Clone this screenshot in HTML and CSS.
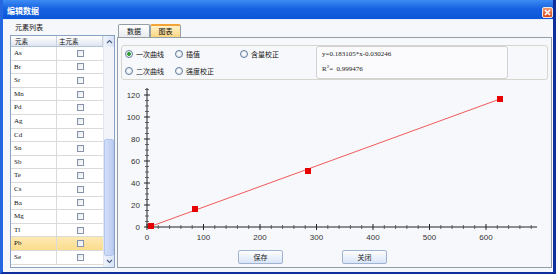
FILE: index.html
```html
<!DOCTYPE html>
<html lang="zh">
<head>
    <meta charset="UTF-8">
    <title>编辑数据</title>
    <link rel="stylesheet" href="styles.css">
</head>
<body>
    <div class="window">
        <div class="titlebar">
            <span class="title">编辑数据</span>
            <span class="close">
                <svg width="9" height="9" viewBox="0 0 9 9"><path d="M2 2L7 7M7 2L2 7" stroke="#fff" stroke-width="1.6"/></svg>
            </span>
        </div>
        <div class="client">
            <!-- 左侧 元素列表 -->
            <div class="left">
                <div class="label">元素列表</div>
                <div class="list">
                    <div class="grid">
                        <div class="head"><span class="hcell">元素</span><span class="hcell">主元素</span></div>
                        <div class="row"><span class="name">As</span><span class="check"><i></i></span></div>
                        <div class="row"><span class="name">Br</span><span class="check"><i></i></span></div>
                        <div class="row"><span class="name">Sr</span><span class="check"><i></i></span></div>
                        <div class="row"><span class="name">Mn</span><span class="check"><i></i></span></div>
                        <div class="row"><span class="name">Pd</span><span class="check"><i></i></span></div>
                        <div class="row"><span class="name">Ag</span><span class="check"><i></i></span></div>
                        <div class="row"><span class="name">Cd</span><span class="check"><i></i></span></div>
                        <div class="row"><span class="name">Sn</span><span class="check"><i></i></span></div>
                        <div class="row"><span class="name">Sb</span><span class="check"><i></i></span></div>
                        <div class="row"><span class="name">Te</span><span class="check"><i></i></span></div>
                        <div class="row"><span class="name">Cs</span><span class="check"><i></i></span></div>
                        <div class="row"><span class="name">Ba</span><span class="check"><i></i></span></div>
                        <div class="row"><span class="name">Mg</span><span class="check"><i></i></span></div>
                        <div class="row"><span class="name">Tl</span><span class="check"><i></i></span></div>
                        <div class="row sel"><span class="name">Pb</span><span class="check"><i></i></span></div>
                        <div class="row"><span class="name">Se</span><span class="check"><i></i></span></div>
                    </div>
                    <div class="scroll">
                        <div class="arrow">
                            <svg width="7" height="5" viewBox="0 0 7 5"><path d="M1 4L3.5 1.5L6 4" fill="none" stroke="#4d6185" stroke-width="1.2"/></svg>
                        </div>
                        <div class="track"><div class="thumb"></div></div>
                        <div class="arrow">
                            <svg width="7" height="5" viewBox="0 0 7 5"><path d="M1 1L3.5 3.5L6 1" fill="none" stroke="#4d6185" stroke-width="1.2"/></svg>
                        </div>
                    </div>
                </div>
            </div>

            <!-- 右侧 数据/图表 -->
            <div class="right">
                <div class="tabs">
                    <div class="tab">数据</div>
                    <div class="tab active">图表</div>
                </div>
                <div class="panel">
                    <div class="options">
                        <div class="radios">
                            <label class="radio on"><i></i>一次曲线</label>
                            <label class="radio"><i></i>插值</label>
                            <label class="radio"><i></i>含量校正</label>
                            <label class="radio"><i></i>二次曲线</label>
                            <label class="radio"><i></i>强度校正</label>
                        </div>
                        <div class="equation">
                            <div>y=0.183105*x-0.030246</div>
                            <div>R<sup>2</sup>=&nbsp; 0.999476</div>
                        </div>
                    </div>

                    <svg class="chart" width="427" height="163" viewBox="0 0 427 163">
                        <!-- axes -->
                        <path d="M26 5V144H416" fill="none" stroke="#222" stroke-width="1"/>
                        <!-- y ticks -->
                        <path d="M23 144h6M23 122h6M23 100h6M23 78h6M23 56h6M23 34h6M23 12h6" stroke="#222" stroke-width="1"/>
                        <path d="M24 138.5h4M24 133h4M24 127.5h4M24 116.5h4M24 111h4M24 105.5h4M24 94.5h4M24 89h4M24 83.5h4M24 72.5h4M24 67h4M24 61.5h4M24 50.5h4M24 45h4M24 39.5h4M24 28.5h4M24 23h4M24 17.5h4M24 6.5h4" stroke="#444" stroke-width="0.8"/>
                        <!-- x ticks -->
                        <path d="M26 141v6M82.5 141v6M139 141v6M195.5 141v6M252 141v6M308.5 141v6M365 141v6" stroke="#222" stroke-width="1"/>
                        <path d="M37.3 142v4M48.6 142v4M59.9 142v4M71.2 142v4M93.8 142v4M105.1 142v4M116.4 142v4M127.7 142v4M150.3 142v4M161.6 142v4M172.9 142v4M184.2 142v4M206.8 142v4M218.1 142v4M229.4 142v4M240.7 142v4M263.3 142v4M274.6 142v4M285.9 142v4M297.2 142v4M319.8 142v4M331.1 142v4M342.4 142v4M353.7 142v4M376.3 142v4M387.6 142v4M398.9 142v4M410.2 142v4" stroke="#444" stroke-width="0.8"/>
                        <!-- labels -->
                        <g class="ylab">
                            <text x="19" y="15">120</text>
                            <text x="19" y="37">100</text>
                            <text x="19" y="59">80</text>
                            <text x="19" y="81">60</text>
                            <text x="19" y="103">40</text>
                            <text x="19" y="125">20</text>
                            <text x="19" y="147">0</text>
                        </g>
                        <g class="xlab">
                            <text x="26" y="157">0</text>
                            <text x="82.5" y="157">100</text>
                            <text x="139" y="157">200</text>
                            <text x="195.5" y="157">300</text>
                            <text x="252" y="157">400</text>
                            <text x="308.5" y="157">500</text>
                            <text x="365" y="157">600</text>
                        </g>
                        <!-- fit line and points -->
                        <path d="M28 144L379 16" stroke="#ee5a5a" stroke-width="1"/>
                        <g fill="#e60000">
                            <rect x="27" y="140" width="6" height="6"/>
                            <rect x="71" y="123" width="6" height="6"/>
                            <rect x="184" y="85" width="6" height="6"/>
                            <rect x="376" y="13" width="6" height="6"/>
                        </g>
                    </svg>

                    <div class="buttons">
                        <button>保存</button>
                        <button>关闭</button>
                    </div>
                </div>
            </div>
        </div>
    </div>
</body>
</html>
```

FILE: styles.css
```css
body{
    margin: 0;
    background-color: #fff;
    font-family: "Noto Sans CJK SC", "Liberation Sans", sans-serif;
    color: #111;
}
.window{
    width: 556px;
    height: 274px;
    box-sizing: border-box;
    display: flex;
    flex-direction: column;
    border-left: 3px solid #2467e0;
    border-right: 3px solid #0d2f9c;
    border-bottom: 3px solid #0d2f9c;
}
.titlebar{
    height: 19px;
    flex: none;
    box-sizing: border-box;
    display: flex;
    justify-content: space-between;
    align-items: flex-start;
    padding: 4px 0 0 4px;
    background: linear-gradient(#3d8bf3, #1762e2 45%, #0b56d6);
    color: #fff;
}
.title{
    font-size: 8px;
    font-weight: bold;
    line-height: 14px;
}
.close{
    width: 11px;
    height: 11px;
    margin-top: 3px;
    box-sizing: border-box;
    display: flex;
    align-items: center;
    justify-content: center;
    border: 1px solid #f4e6e0;
    border-radius: 2px;
    background: linear-gradient(#f29a70, #d8481e);
}
.close svg{
    display: block;
}
.client{
    flex: 1;
    display: flex;
    gap: 2px;
    padding: 0 1px 4px 7px;
    background-color: #f5f7fb;
    border-top: 1px solid #e8eef8;
}

/* left list */
.left{
    width: 105px;
    display: flex;
    flex-direction: column;
}
.label{
    height: 15px;
    line-height: 15px;
    padding-left: 5px;
    font-size: 7px;
}
.list{
    flex: 1;
    display: flex;
    border: 1px solid #8aa2c2;
    background-color: #fff;
    overflow: hidden;
    min-height: 0;
}
.grid{
    width: 92px;
}
.head{
    display: flex;
    height: 11px;
    box-sizing: border-box;
    border-bottom: 1px solid #b4c2d6;
    background: linear-gradient(#ffffff, #dfe6f1);
}
.hcell{
    width: 46px;
    box-sizing: border-box;
    padding-left: 4px;
    border-right: 1px solid #c8d2e0;
    font-size: 6.5px;
    line-height: 10px;
}
.hcell + .hcell{
    padding-left: 2px;
}
.row{
    display: flex;
    height: 13.6px;
    box-sizing: border-box;
    border-bottom: 1px solid #dadada;
}
.row.sel{
    background: linear-gradient(#fde9b4, #fbdc8c);
}
.name{
    width: 46px;
    box-sizing: border-box;
    padding-left: 3px;
    border-right: 1px solid #dadada;
    font-family: "Liberation Serif", serif;
    font-size: 7px;
    line-height: 12.6px;
    color: #111;
}
.check{
    width: 46px;
    box-sizing: border-box;
    display: flex;
    align-items: center;
    justify-content: center;
}
.check i{
    width: 7px;
    height: 7px;
    box-sizing: border-box;
    border: 1px solid #8594aa;
    background: linear-gradient(135deg, #e4e7ec, #ffffff);
}
.scroll{
    width: 11px;
    display: flex;
    flex-direction: column;
    border-left: 1px solid #e2e6ee;
    background-color: #f2f4f9;
}
.arrow{
    height: 11px;
    display: flex;
    align-items: center;
    justify-content: center;
    background: linear-gradient(90deg, #eef2fb, #d9e3f6);
}
.track{
    flex: 1;
    display: flex;
    flex-direction: column;
    padding-top: 92px;
}
.thumb{
    flex: 1;
    border: 1px solid #b3c5ec;
    border-radius: 2px;
    background: linear-gradient(90deg, #d3dff8, #bccdf2);
}

/* right side */
.right{
    flex: 1;
    display: flex;
    flex-direction: column;
    padding-top: 4px;
}
.tabs{
    display: flex;
    height: 13px;
    padding-left: 1px;
}
.tab{
    width: 32px;
    box-sizing: border-box;
    border: 1px solid #939ea6;
    border-bottom: none;
    border-radius: 2px 2px 0 0;
    text-align: center;
    font-size: 7px;
    line-height: 12px;
    background: linear-gradient(#ffffff, #e9ebee);
}
.tab.active{
    width: 31px;
    border-top: 2px solid #f2a33a;
    line-height: 11px;
    background: linear-gradient(#fff1c8, #fcd680);
}
.panel{
    flex: 1;
    display: flex;
    flex-direction: column;
    padding: 7px 3px 3px 3px;
    border: 1px solid #939ea6;
    background-color: #f7f8fb;
}
.options{
    height: 35px;
    box-sizing: border-box;
    display: flex;
    align-items: center;
    padding: 0 39px 0 3px;
    border: 1px solid #d6d6cc;
    border-radius: 3px;
}
.radios{
    width: 191px;
    display: grid;
    grid-template-columns: 50px 65px auto;
    grid-template-rows: 13px 13px;
    row-gap: 4px;
}
.radio{
    display: flex;
    align-items: center;
    gap: 3px;
    font-size: 7px;
    line-height: 13px;
    white-space: nowrap;
}
.radio i{
    width: 8px;
    height: 8px;
    box-sizing: border-box;
    border: 1px solid #5f7c9f;
    border-radius: 50%;
    background: radial-gradient(#ffffff, #dde2e8);
}
.radio.on i{
    background: radial-gradient(circle, #32a032 0 1.6px, #f4f6f4 2.2px);
}
.equation{
    flex: 1;
    align-self: stretch;
    box-sizing: border-box;
    display: flex;
    flex-direction: column;
    gap: 2px;
    padding: 1px 5px 0;
    border: 1px solid #d2d2d2;
    border-radius: 3px;
    background-color: #fbfbfd;
    font-family: "Liberation Serif", serif;
    font-size: 7px;
    line-height: 13px;
    color: #222;
}
.equation sup{
    font-size: 5px;
    line-height: 0;
}
.chart{
    display: block;
    margin-top: 3px;
}
.chart text{
    font-family: "Liberation Sans", sans-serif;
    font-size: 8px;
    fill: #333;
}
.ylab text{
    text-anchor: end;
}
.xlab text{
    text-anchor: middle;
}
.buttons{
    display: flex;
    gap: 59px;
    margin-top: 4px;
    padding-left: 117px;
}
button{
    width: 45px;
    height: 14px;
    padding: 0;
    border: 1px solid #9fb4d2;
    border-radius: 2px;
    background: linear-gradient(#fdfefe, #d9e5f7);
    font-family: "Noto Sans CJK SC", sans-serif;
    font-size: 7px;
    color: #222;
}
```
